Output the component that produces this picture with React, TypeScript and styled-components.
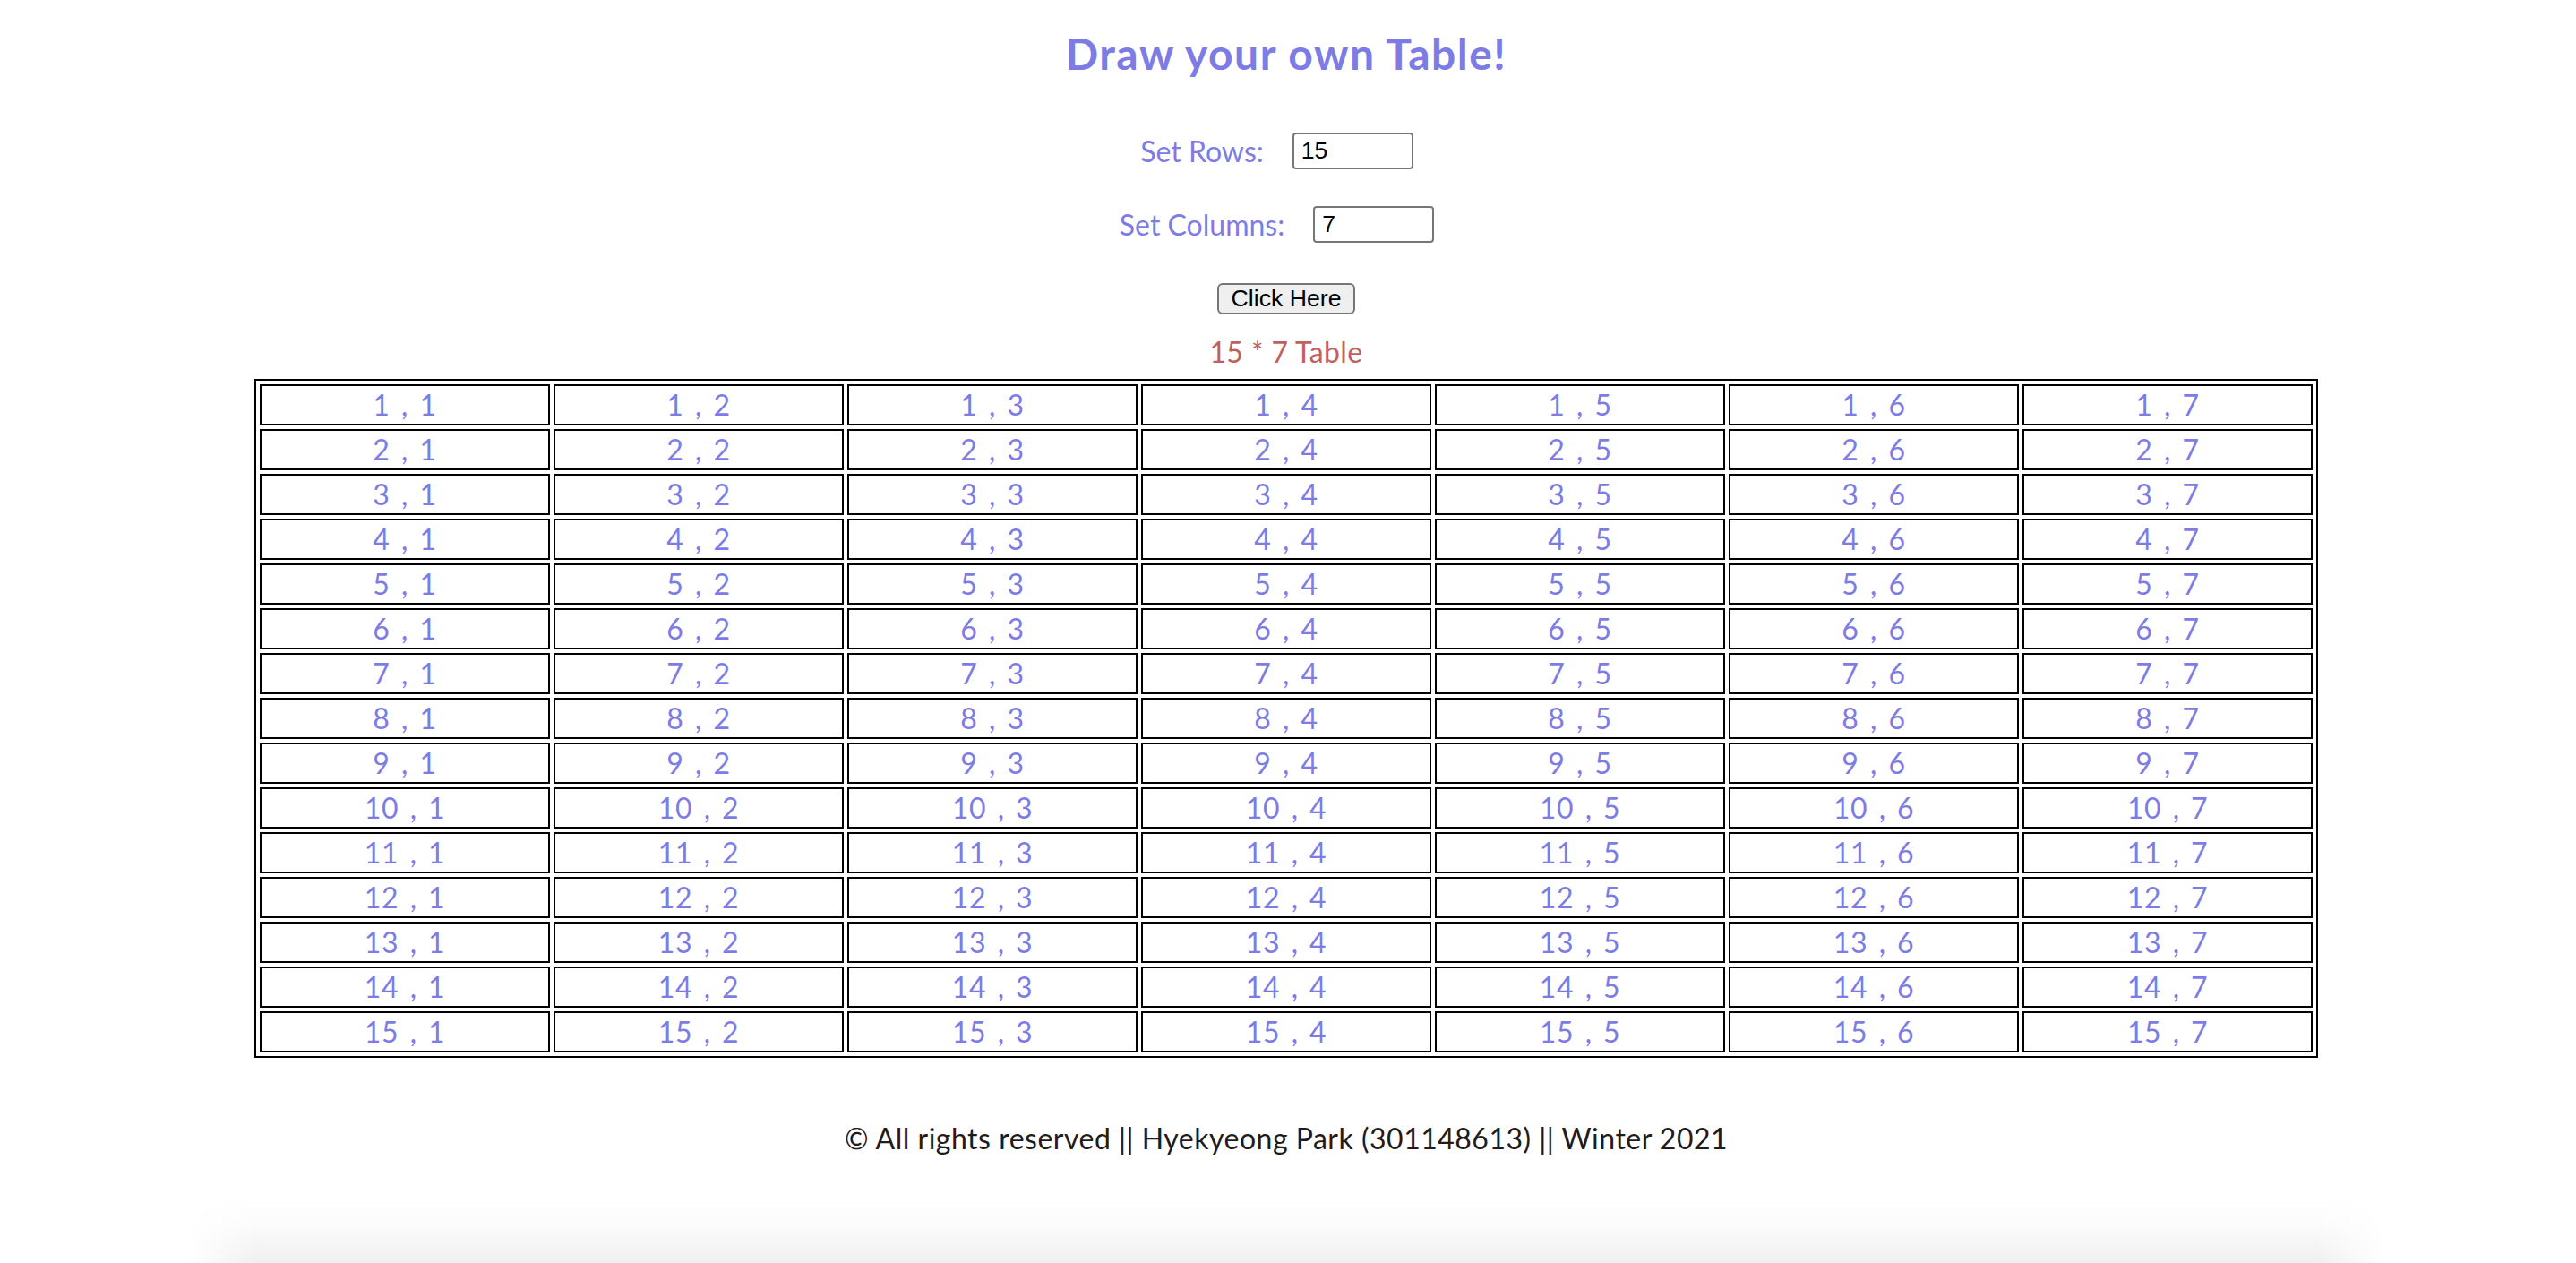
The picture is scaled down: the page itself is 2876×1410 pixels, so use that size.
import React from "react";
import styled, { createGlobalStyle } from "styled-components";

const GlobalStyle = createGlobalStyle`
  html, body {
    margin: 0;
    padding: 0;
    background: #ffffff;
  }
  body {
    font-family: Lato, "Open Sans", "DejaVu Sans", sans-serif;
  }
`;

const Page = styled.div`
  display: flex;
  flex-direction: column;
  align-items: center;
  padding: 32px 4px 0 0;
  height: 1410px;
  box-sizing: border-box;
  overflow: hidden;
`;

const Title = styled.h2`
  margin: 0;
  font-size: 48px;
  line-height: 56px;
  font-weight: 700;
  letter-spacing: 1.5px;
  color: #7d7ce5;
`;

const FieldRow = styled.div<{ $top: number }>`
  display: flex;
  align-items: center;
  gap: 32px;
  margin-top: ${(p) => p.$top}px;
  padding-right: 21px;
`;

const Label = styled.label`
  font-size: 32px;
  line-height: 38px;
  color: #7d7ce5;
`;

const NumberInput = styled.input`
  box-sizing: border-box;
  width: 135px;
  height: 41px;
  padding: 0 8px;
  border: 2px solid #767676;
  border-radius: 4px;
  font-family: "Liberation Sans", Arial, sans-serif;
  font-size: 26.67px;
  color: #000;
  outline: none;
`;

const Button = styled.button`
  box-sizing: border-box;
  margin-top: 45px;
  width: 154px;
  height: 40px;
  padding: 0;
  background: #efefef;
  border: 2px solid #767676;
  border-radius: 6px;
  font-family: "Liberation Sans", Arial, sans-serif;
  font-size: 26.67px;
  color: #000;
`;

const Caption = styled.div`
  margin-top: 23px;
  font-size: 32px;
  line-height: 38px;
  letter-spacing: 0.4px;
  color: #c15f5f;
`;

const Grid = styled.table`
  margin-top: 11px;
  width: 2304px;
  border: 2px solid #000;
  border-collapse: separate;
  border-spacing: 4px;
  table-layout: fixed;
`;

const Cell = styled.td`
  height: 42px;
  padding: 0;
  border: 2px solid #000;
  text-align: center;
  vertical-align: middle;
  font-size: 32px;
  line-height: 38px;
  word-spacing: 4px;
  letter-spacing: 0.5px;
  color: #7d7ce5;
`;

const Footer = styled.footer`
  margin-top: 71px;
  font-size: 32px;
  line-height: 38px;
  letter-spacing: 0.5px;
  color: #231a1a;
`;

const Fade = styled.div`
  margin-top: 48px;
  width: 2456px;
  height: 76px;
  flex-shrink: 0;
  background: linear-gradient(
    to bottom,
    rgba(0, 0, 0, 0) 0%,
    rgba(0, 0, 0, 0.015) 40%,
    rgba(0, 0, 0, 0.065) 100%
  );
  -webkit-mask-image: linear-gradient(
    to right,
    transparent 0,
    #000 80px,
    #000 calc(100% - 80px),
    transparent 100%
  );
  mask-image: linear-gradient(
    to right,
    transparent 0,
    #000 80px,
    #000 calc(100% - 80px),
    transparent 100%
  );
`;

const ROWS = 15;
const COLS = 7;

export default function App() {
  const rows = Array.from({ length: ROWS }, (_, i) => i + 1);
  const cols = Array.from({ length: COLS }, (_, j) => j + 1);
  return (
    <>
      <GlobalStyle />
      <Page>
        <Title>Draw your own Table!</Title>
        <FieldRow $top={60}>
          <Label htmlFor="rows">Set Rows:</Label>
          <NumberInput id="rows" type="text" defaultValue="15" />
        </FieldRow>
        <FieldRow $top={41}>
          <Label htmlFor="cols">Set Columns:</Label>
          <NumberInput id="cols" type="text" defaultValue="7" />
        </FieldRow>
        <Button type="button">Click Here</Button>
        <Caption>15 * 7 Table</Caption>
        <Grid>
          <tbody>
            {rows.map((r) => (
              <tr key={r}>
                {cols.map((c) => (
                  <Cell key={c}>
                    {r} , {c}
                  </Cell>
                ))}
              </tr>
            ))}
          </tbody>
        </Grid>
        <Footer>© All rights reserved || Hyekyeong Park (301148613) || Winter 2021</Footer>
        <Fade />
      </Page>
    </>
  );
}
